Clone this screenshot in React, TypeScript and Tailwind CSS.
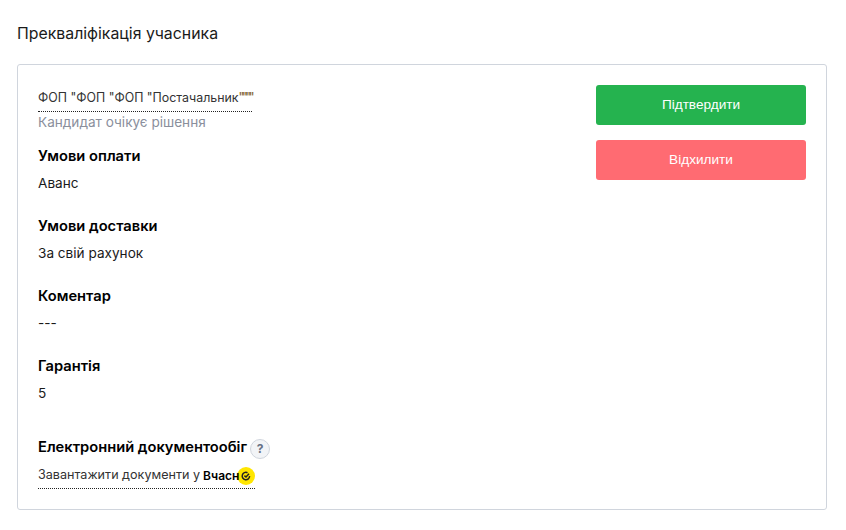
import React from 'react';

const fields = [
  { label: 'Умови оплати', value: 'Аванс', top: 'mt-[14px]' },
  { label: 'Умови доставки', value: 'За свій рахунок', top: 'mt-[21px]' },
  { label: 'Коментар', value: '---', top: 'mt-[21px]' },
  { label: 'Гарантія', value: '5', top: 'mt-[21px]' },
];

const App: React.FC = () => {
  return (
    <div className="w-[846px] h-[530px] bg-white overflow-hidden px-[17px] pt-[23px] font-['Inter',sans-serif] text-black">
      <h1 className="text-[15.85px] leading-[22px] font-normal text-[#1a1a1a]">Прекваліфікація учасника</h1>

      <div className="mt-[19px] w-[810px] h-[446px] border border-[#d0d5dd] rounded-[3px] pl-[20px] pr-[20px] pt-[19px] flex justify-between">
        <div>
          <div className="inline-block border-b border-dotted border-[#222] text-[12.4px] leading-[26px] text-[#333]">
            ФОП "ФОП "ФОП "Постачальник<span className="tracking-[-2.4px] text-[#7a5a2c]">""""</span>
          </div>
          <div className="text-[13.6px] leading-[20px] text-[#8a8f9c]">Кандидат очікує рішення</div>

          {fields.map((field) => (
            <div key={field.label} className={field.top}>
              <div className="text-[14.7px] leading-[20px] font-semibold">{field.label}</div>
              <div className="mt-[6px] text-[13.6px] leading-[23px] text-[#1a1a1a]">{field.value}</div>
            </div>
          ))}

          <div className="mt-[32px] flex items-start gap-[3px]">
            <span className="text-[14.7px] leading-[20px] font-semibold">Електронний документообіг</span>
            <span className="mt-[2px] w-[20px] h-[20px] rounded-full bg-[#f2f4f7] border border-[#d0d5dd] flex items-center justify-center text-[12px] font-bold text-[#667085]">
              ?
            </span>
          </div>
          <div className="mt-[4px] inline-flex items-center h-[26px] border-b border-dotted border-[#222]">
            <span className="text-[12.6px] text-[#333]">Завантажити документи у</span>
            <span className="relative z-10 ml-[3px] text-[12px] font-semibold text-black">Вчасн</span>
            <span className="w-[18px] h-[18px] -ml-[2px] rounded-full bg-[#ffe600] flex items-center justify-center">
              <svg width="10" height="10" viewBox="0 0 10 10" fill="none" stroke="#222" strokeWidth="1.5">
                <path d="M8.6 5A3.7 3.7 0 1 1 6.5 1.7" />
                <path d="M3.4 4.6 5 6l3-3.2" />
              </svg>
            </span>
          </div>
        </div>

        <div className="mt-[1px] w-[210px] flex flex-col gap-[15px]">
          <button className="h-[40px] rounded-[3px] bg-[#25b34f] text-white text-[13.6px] font-['Liberation_Sans',sans-serif]">Підтвердити</button>
          <button className="h-[40px] rounded-[3px] bg-[#ff6b72] text-white text-[13.6px] font-['Liberation_Sans',sans-serif]">Відхилити</button>
        </div>
      </div>
    </div>
  );
};

export default App;
